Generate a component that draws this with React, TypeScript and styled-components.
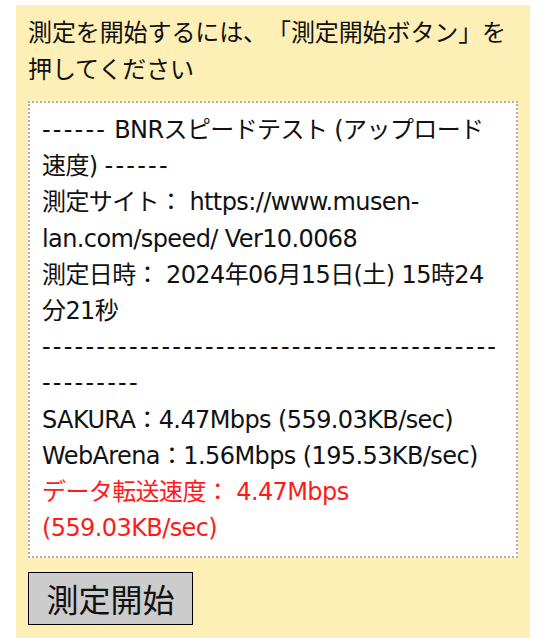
import React from "react";
import styled, { createGlobalStyle } from "styled-components";

const Global = createGlobalStyle`
  html, body { margin: 0; padding: 0; background: #fff; }
  body {
    font-family: "DejaVu Sans", "Noto Sans CJK JP", sans-serif;
    color: #111;
    text-spacing-trim: space-all;
  }
`;

const Panel = styled.section`
  box-sizing: border-box;
  width: 514px;
  margin: 5px 0 0 16px;
  padding: 10px 12px 14px 12px;
  background: #fdefb5;
`;

const Title = styled.p`
  margin: 0 0 12px 0;
  font-size: 24px;
  line-height: 37px;
  letter-spacing: -0.1px;
  text-spacing-trim: space-all;
`;

const Result = styled.div`
  box-sizing: border-box;
  width: 490px;
  padding: 9px 12px 10px 12px;
  background: #fff;
  border: 2px dotted #b0b0b0;
  font-size: 24px;
  line-height: 36.2px;
  letter-spacing: -0.6px;
  word-break: break-word;
  text-spacing-trim: space-all;
`;

const Line = styled.div<{ $red?: boolean }>`
  color: ${(p) => (p.$red ? "#ff1a1a" : "#111")};
`;

const Dashes = styled.span`
  letter-spacing: 2.2px;
`;

const StartButton = styled.button`
  box-sizing: border-box;
  margin-top: 14px;
  width: 165px;
  height: 53px;
  padding: 0;
  background: #cccccc;
  border: 1px solid #000;
  border-radius: 0;
  font-family: "Noto Sans CJK JP", sans-serif;
  font-size: 32px;
  line-height: 51px;
  color: #111;
  display: block;
  text-align: center;
`;

export default function App() {
  return (
    <>
      <Global />
      <Panel>
        <Title>測定を開始するには、「測定開始ボタン」を押してください</Title>
        <Result>
          <Line>
            <Dashes>------</Dashes> BNRスピードテスト (アップロード速度) <Dashes>------</Dashes>
          </Line>
          <Line>測定サイト： https://www.musen-lan.com/speed/ Ver10.0068</Line>
          <Line>測定日時： 2024年06月15日(土) 15時24分21秒</Line>
          <Line>
            <Dashes>---------------------------------------------------</Dashes>
          </Line>
          <Line>SAKURA：4.47Mbps (559.03KB/sec)</Line>
          <Line>WebArena：1.56Mbps (195.53KB/sec)</Line>
          <Line $red>データ転送速度： 4.47Mbps (559.03KB/sec)</Line>
        </Result>
        <StartButton>測定開始</StartButton>
      </Panel>
    </>
  );
}
